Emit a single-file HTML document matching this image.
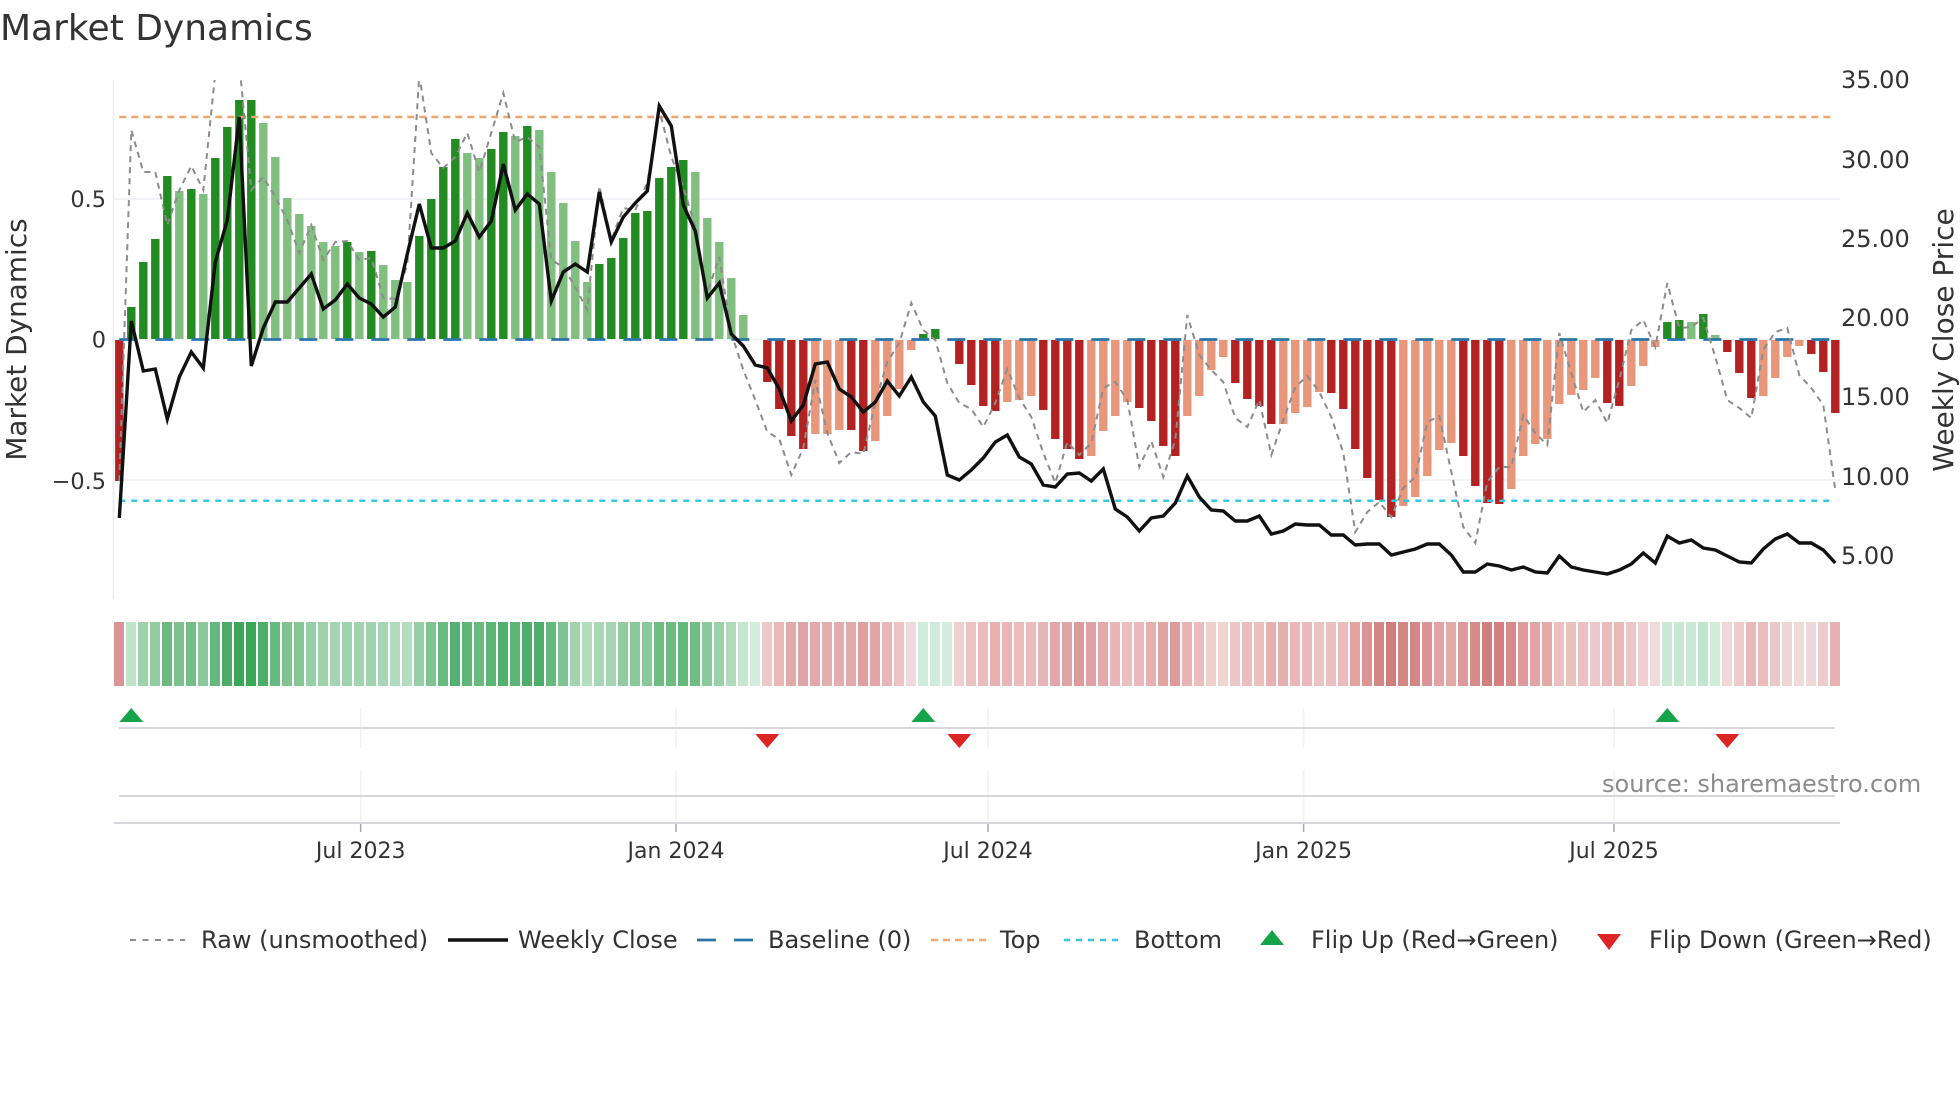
<!DOCTYPE html>
<html lang="en">
<head>
<meta charset="utf-8">
<title>Market Dynamics</title>
<style>
html,body{margin:0;padding:0;background:#fff;width:1960px;height:1102px;overflow:hidden}
svg{position:absolute;left:0;top:0}
text{font-family:"DejaVu Sans","Liberation Sans",sans-serif}
#strip{position:absolute;left:114.3px;top:622px;height:64px;display:flex;width:1730px}
#strip i{display:block;flex:none;width:10px;height:64px;margin-right:2px}
</style>
</head>
<body>
<div id="strip"><i style="background:#db9393"></i><i style="background:#bfe3c8"></i><i style="background:#9dd2ab"></i><i style="background:#92cda1"></i><i style="background:#6bbb80"></i><i style="background:#7dc28e"></i><i style="background:#72be86"></i><i style="background:#8ac99b"></i><i style="background:#65b97c"></i><i style="background:#4fab6b"></i><i style="background:#3aa858"></i><i style="background:#3aa858"></i><i style="background:#4cae69"></i><i style="background:#66ba7d"></i><i style="background:#7fc391"></i><i style="background:#85c696"></i><i style="background:#96cfa5"></i><i style="background:#9dd2ab"></i><i style="background:#a4d4b1"></i><i style="background:#9fd2ae"></i><i style="background:#a2d3af"></i><i style="background:#a0d3ae"></i><i style="background:#a8d6b5"></i><i style="background:#b2dbbd"></i><i style="background:#b4dcbf"></i><i style="background:#96cfa5"></i><i style="background:#7fc391"></i><i style="background:#68ba7f"></i><i style="background:#55b172"></i><i style="background:#60b678"></i><i style="background:#68ba7f"></i><i style="background:#5cb575"></i><i style="background:#52b06e"></i><i style="background:#5cb575"></i><i style="background:#4fad6b"></i><i style="background:#4fad6b"></i><i style="background:#66ba7d"></i><i style="background:#80c393"></i><i style="background:#a0d3ae"></i><i style="background:#b4dcbf"></i><i style="background:#a8d7b5"></i><i style="background:#a4d4b1"></i><i style="background:#90cca0"></i><i style="background:#88c89a"></i><i style="background:#88c89a"></i><i style="background:#70bd84"></i><i style="background:#6dbc82"></i><i style="background:#66b97d"></i><i style="background:#70bd84"></i><i style="background:#8ac99b"></i><i style="background:#9ad1a9"></i><i style="background:#b0dabb"></i><i style="background:#c5e6cf"></i><i style="background:#d3ecdf"></i><i style="background:#ecc8c8"></i><i style="background:#e9b8b9"></i><i style="background:#e2a9a9"></i><i style="background:#dea4a5"></i><i style="background:#e4a7aa"></i><i style="background:#e3aeae"></i><i style="background:#e4acae"></i><i style="background:#e3aaac"></i><i style="background:#df9f9f"></i><i style="background:#e3a6a8"></i><i style="background:#e9b5b7"></i><i style="background:#ecc4c4"></i><i style="background:#f0d8dc"></i><i style="background:#d0ebdb"></i><i style="background:#cfeadc"></i><i style="background:#d3ecdf"></i><i style="background:#efd0d2"></i><i style="background:#eac4c4"></i><i style="background:#ebbaba"></i><i style="background:#e9b0b2"></i><i style="background:#e9b5b6"></i><i style="background:#ecbcbc"></i><i style="background:#ecbcbc"></i><i style="background:#e6b5b5"></i><i style="background:#e4a6aa"></i><i style="background:#dfa4a6"></i><i style="background:#dc9b9c"></i><i style="background:#e0a0a4"></i><i style="background:#e5a9ac"></i><i style="background:#eab5b8"></i><i style="background:#ecbebe"></i><i style="background:#ecb8bc"></i><i style="background:#e6b0b0"></i><i style="background:#e0a59f"></i><i style="background:#e19a9c"></i><i style="background:#e9b2b4"></i><i style="background:#ecbcbe"></i><i style="background:#edd0cc"></i><i style="background:#efd5d2"></i><i style="background:#ecc5c6"></i><i style="background:#edbcbe"></i><i style="background:#edbfbf"></i><i style="background:#e9b0b2"></i><i style="background:#e6b0b0"></i><i style="background:#eab6b8"></i><i style="background:#ebb9bb"></i><i style="background:#ecc2c2"></i><i style="background:#ebc0c0"></i><i style="background:#ecbcbc"></i><i style="background:#e3a4a0"></i><i style="background:#dc9394"></i><i style="background:#d38885"></i><i style="background:#d07d7b"></i><i style="background:#d28783"></i><i style="background:#d38885"></i><i style="background:#dc9396"></i><i style="background:#e3a2a4"></i><i style="background:#e3a8a8"></i><i style="background:#de9a9a"></i><i style="background:#d58b88"></i><i style="background:#d07f7d"></i><i style="background:#d17f80"></i><i style="background:#d68a8a"></i><i style="background:#df9a9c"></i><i style="background:#e3a4a6"></i><i style="background:#e4a8a8"></i><i style="background:#ecc0c2"></i><i style="background:#e9c2bc"></i><i style="background:#ecc0c4"></i><i style="background:#ecc8ca"></i><i style="background:#ebbaba"></i><i style="background:#e9b9b6"></i><i style="background:#ecc6c6"></i><i style="background:#efcfd0"></i><i style="background:#f0dada"></i><i style="background:#c9e9d4"></i><i style="background:#c9e8d3"></i><i style="background:#cbe8d5"></i><i style="background:#c0e5cc"></i><i style="background:#d0ecd9"></i><i style="background:#f0d8d8"></i><i style="background:#eecbcd"></i><i style="background:#e9b8b8"></i><i style="background:#ecbcbc"></i><i style="background:#ebc8c8"></i><i style="background:#eed5d5"></i><i style="background:#f0dada"></i><i style="background:#f0d8da"></i><i style="background:#eeccce"></i><i style="background:#e8b0b2"></i></div>

<svg width="1960" height="1102" viewBox="0 0 1960 1102" xmlns="http://www.w3.org/2000/svg">
<defs><clipPath id="c"><rect x="113" y="80" width="1727" height="519"/></clipPath></defs>

<text x="0" y="40" font-size="36" fill="#333">Market Dynamics</text>

<!-- grid and axis -->
<path d="M113.5 80V599" stroke="#e8eaf1" stroke-width="1.5" fill="none"/>
<path d="M113.5 199H1840M113.5 339.5H1840M113.5 480H1840" stroke="#f1f2f6" stroke-width="2" fill="none"/>

<!-- bars -->
<path fill="#228b22" d="M127.1 307h8.4V339h-8.4zM139.1 262h8.4V339h-8.4zM151.1 239h8.4V339h-8.4zM163.1 176h8.4V339h-8.4zM187.1 189h8.4V339h-8.4zM211.1 158h8.4V339h-8.4zM223.1 127h8.4V339h-8.4zM235.1 100h8.4V339h-8.4zM247.1 100h8.4V339h-8.4zM343.1 242h8.4V339h-8.4zM367.1 251h8.4V339h-8.4zM415.1 236h8.4V339h-8.4zM427.1 199h8.4V339h-8.4zM439.1 167h8.4V339h-8.4zM451.1 139h8.4V339h-8.4zM487.1 149h8.4V339h-8.4zM499.1 132h8.4V339h-8.4zM523.1 126h8.4V339h-8.4zM595.1 264h8.4V339h-8.4zM607.1 258h8.4V339h-8.4zM619.1 238h8.4V339h-8.4zM631.1 213h8.4V339h-8.4zM643.1 211h8.4V339h-8.4zM655.1 178h8.4V339h-8.4zM667.1 167h8.4V339h-8.4zM679.1 160h8.4V339h-8.4zM919.1 334h8.4V339h-8.4zM931.1 329h8.4V339h-8.4zM1663.1 322h8.4V339h-8.4zM1675.1 320h8.4V339h-8.4zM1699.1 314h8.4V339h-8.4z"/>
<path fill="#80bf80" d="M175.1 191h8.4V339h-8.4zM199.1 194h8.4V339h-8.4zM259.1 123h8.4V339h-8.4zM271.1 157h8.4V339h-8.4zM283.1 198h8.4V339h-8.4zM295.1 214h8.4V339h-8.4zM307.1 226h8.4V339h-8.4zM319.1 242h8.4V339h-8.4zM331.1 246h8.4V339h-8.4zM355.1 252h8.4V339h-8.4zM379.1 265h8.4V339h-8.4zM391.1 280h8.4V339h-8.4zM403.1 282h8.4V339h-8.4zM463.1 153h8.4V339h-8.4zM475.1 158h8.4V339h-8.4zM511.1 136h8.4V339h-8.4zM535.1 130h8.4V339h-8.4zM547.1 172h8.4V339h-8.4zM559.1 203h8.4V339h-8.4zM571.1 241h8.4V339h-8.4zM583.1 282h8.4V339h-8.4zM691.1 172h8.4V339h-8.4zM703.1 218h8.4V339h-8.4zM715.1 242h8.4V339h-8.4zM727.1 278h8.4V339h-8.4zM739.1 315h8.4V339h-8.4zM1687.1 322h8.4V339h-8.4zM1711.1 335h8.4V339h-8.4z"/>
<path fill="#b22222" d="M115.1 340h8.4V481h-8.4zM763.1 340h8.4V382h-8.4zM775.1 340h8.4V409h-8.4zM787.1 340h8.4V436h-8.4zM799.1 340h8.4V449h-8.4zM847.1 340h8.4V430h-8.4zM859.1 340h8.4V451h-8.4zM955.1 340h8.4V364h-8.4zM967.1 340h8.4V385h-8.4zM979.1 340h8.4V406h-8.4zM991.1 340h8.4V411h-8.4zM1039.1 340h8.4V410h-8.4zM1051.1 340h8.4V439h-8.4zM1063.1 340h8.4V449h-8.4zM1075.1 340h8.4V459h-8.4zM1135.1 340h8.4V408h-8.4zM1147.1 340h8.4V421h-8.4zM1159.1 340h8.4V446h-8.4zM1171.1 340h8.4V456h-8.4zM1231.1 340h8.4V383h-8.4zM1243.1 340h8.4V399h-8.4zM1255.1 340h8.4V406h-8.4zM1267.1 340h8.4V424h-8.4zM1327.1 340h8.4V393h-8.4zM1339.1 340h8.4V409h-8.4zM1351.1 340h8.4V449h-8.4zM1363.1 340h8.4V478h-8.4zM1375.1 340h8.4V500h-8.4zM1387.1 340h8.4V517h-8.4zM1459.1 340h8.4V456h-8.4zM1471.1 340h8.4V486h-8.4zM1483.1 340h8.4V503h-8.4zM1495.1 340h8.4V504h-8.4zM1603.1 340h8.4V403h-8.4zM1615.1 340h8.4V406h-8.4zM1723.1 340h8.4V352h-8.4zM1735.1 340h8.4V373h-8.4zM1747.1 340h8.4V398h-8.4zM1807.1 340h8.4V354h-8.4zM1819.1 340h8.4V372h-8.4zM1831.1 340h8.4V413h-8.4z"/>
<path fill="#e9977a" d="M811.1 340h8.4V434h-8.4zM823.1 340h8.4V434h-8.4zM835.1 340h8.4V430h-8.4zM871.1 340h8.4V441h-8.4zM883.1 340h8.4V416h-8.4zM895.1 340h8.4V389h-8.4zM907.1 340h8.4V350h-8.4zM1003.1 340h8.4V402h-8.4zM1015.1 340h8.4V400h-8.4zM1027.1 340h8.4V396h-8.4zM1087.1 340h8.4V456h-8.4zM1099.1 340h8.4V431h-8.4zM1111.1 340h8.4V416h-8.4zM1123.1 340h8.4V402h-8.4zM1183.1 340h8.4V416h-8.4zM1195.1 340h8.4V396h-8.4zM1207.1 340h8.4V370h-8.4zM1219.1 340h8.4V357h-8.4zM1279.1 340h8.4V424h-8.4zM1291.1 340h8.4V413h-8.4zM1303.1 340h8.4V407h-8.4zM1315.1 340h8.4V392h-8.4zM1399.1 340h8.4V506h-8.4zM1411.1 340h8.4V497h-8.4zM1423.1 340h8.4V476h-8.4zM1435.1 340h8.4V450h-8.4zM1447.1 340h8.4V443h-8.4zM1507.1 340h8.4V489h-8.4zM1519.1 340h8.4V456h-8.4zM1531.1 340h8.4V444h-8.4zM1543.1 340h8.4V439h-8.4zM1555.1 340h8.4V404h-8.4zM1567.1 340h8.4V395h-8.4zM1579.1 340h8.4V390h-8.4zM1591.1 340h8.4V378h-8.4zM1627.1 340h8.4V386h-8.4zM1639.1 340h8.4V366h-8.4zM1651.1 340h8.4V347h-8.4zM1759.1 340h8.4V396h-8.4zM1771.1 340h8.4V378h-8.4zM1783.1 340h8.4V357h-8.4zM1795.1 340h8.4V346h-8.4z"/>

<!-- reference lines -->
<path d="M119.3 339.5H1835" stroke="#2a76a8" stroke-width="2.8" stroke-dasharray="18 18" fill="none"/>
<path d="M119.3 117H1835" stroke="#f0a76c" stroke-width="2.5" stroke-dasharray="7 5" fill="none"/>
<path d="M119.3 500.7H1835" stroke="#36c6dd" stroke-width="2.5" stroke-dasharray="6 6" fill="none"/>

<!-- raw line -->
<path clip-path="url(#c)" fill="none" stroke="#8c8c8c" stroke-width="2" stroke-dasharray="6 5" d="M119.3 481 131.3 130 143.3 172 155.3 172 167.3 225 179.3 190 191.3 166 203.3 190 215.3 73 227.3 40 239.3 63 251.3 190 263.3 177 275.3 197 287.3 220 299.3 253 311.3 225 323.3 260 335.3 242 347.3 241 359.3 260 371.3 258 383.3 298 395.3 299 407.3 265 419.3 75 431.3 153 443.3 168 455.3 157 467.3 133 479.3 172 491.3 133 503.3 93 515.3 142 527.3 137 539.3 147 551.3 260 563.3 267 575.3 287 587.3 310 599.3 186 611.3 240 623.3 208 635.3 210 647.3 183 659.3 110 671.3 157 683.3 187 695.3 227 707.3 293 719.3 257 731.3 333 743.3 370 755.3 400 767.3 432 779.3 439 791.3 475 803.3 448 815.3 380 827.3 433 839.3 463 851.3 452 863.3 454 875.3 403 887.3 362 899.3 343 911.3 303 923.3 330 935.3 340 947.3 383 959.3 403 971.3 409 983.3 427 995.3 403 1007.3 369 1019.3 398 1031.3 417 1043.3 453 1055.3 483 1067.3 442 1079.3 455 1091.3 443 1103.3 388 1115.3 382 1127.3 400 1139.3 467 1151.3 441 1163.3 477 1175.3 440 1187.3 315 1199.3 355 1211.3 370 1223.3 382 1235.3 418 1247.3 427 1259.3 400 1271.3 455 1283.3 420 1295.3 387 1307.3 376 1319.3 392 1331.3 417 1343.3 453 1355.3 532 1367.3 512 1379.3 502 1391.3 517 1403.3 488 1415.3 477 1427.3 422 1439.3 416 1451.3 472 1463.3 527 1475.3 543 1487.3 482 1499.3 467 1511.3 467 1523.3 415 1535.3 433 1547.3 445 1559.3 333 1571.3 373 1583.3 412 1595.3 400 1607.3 423 1619.3 380 1631.3 330 1643.3 320 1655.3 347 1667.3 283 1679.3 328 1691.3 327 1703.3 318 1715.3 357 1727.3 400 1739.3 408 1751.3 418 1763.3 350 1775.3 332 1787.3 328 1799.3 375 1811.3 388 1823.3 405 1835.3 490"/>

<!-- weekly close -->
<path fill="none" stroke="#111" stroke-width="3.4" d="M119.3 518 131.3 321 143.3 371 155.3 369 167.3 419 179.3 377 191.3 352 203.3 368 215.3 262 227.3 220 239.3 117 251.3 366 263.3 328 275.3 302 287.3 302 299.3 288 311.3 274 323.3 309 335.3 300 347.3 284 359.3 298 371.3 304 383.3 317 395.3 307 407.3 254 419.3 204 431.3 248 443.3 248 455.3 241 467.3 213 479.3 237 491.3 221 503.3 164 515.3 210 527.3 194 539.3 204 551.3 301 563.3 272 575.3 264 587.3 272 599.3 192 611.3 242 623.3 217 635.3 203 647.3 191 659.3 106 671.3 126 683.3 205 695.3 231 707.3 298 719.3 283 731.3 334 743.3 346 755.3 365 767.3 368 779.3 389 791.3 421 803.3 405 815.3 364 827.3 362 839.3 389 851.3 397 863.3 412 875.3 402 887.3 381 899.3 396 911.3 377 923.3 402 935.3 416 947.3 475 959.3 480 971.3 470 983.3 458 995.3 442 1007.3 435 1019.3 457 1031.3 464 1043.3 485 1055.3 487 1067.3 474 1079.3 473 1091.3 481 1103.3 469 1115.3 509 1127.3 517 1139.3 531 1151.3 518 1163.3 516 1175.3 503 1187.3 476 1199.3 497 1211.3 510 1223.3 511 1235.3 521 1247.3 521 1259.3 516 1271.3 534 1283.3 531 1295.3 524 1307.3 525 1319.3 525 1331.3 535 1343.3 535 1355.3 545 1367.3 544 1379.3 544 1391.3 555 1403.3 552 1415.3 549 1427.3 544 1439.3 544 1451.3 555 1463.3 572 1475.3 572 1487.3 564 1499.3 566 1511.3 570 1523.3 567 1535.3 572 1547.3 573 1559.3 556 1571.3 567 1583.3 570 1595.3 572 1607.3 574 1619.3 570 1631.3 564 1643.3 553 1655.3 563 1667.3 536 1679.3 543 1691.3 540 1703.3 548 1715.3 550 1727.3 556 1739.3 562 1751.3 563 1763.3 549 1775.3 539 1787.3 534 1799.3 543 1811.3 543 1823.3 550 1835.3 563"/>

<!-- axis labels -->
<g font-size="22.4" fill="#333" text-anchor="end">
<text x="106" y="207">0.5</text>
<text x="106" y="347.5">0</text>
<text x="106" y="489">−0.5</text>
</g>
<g font-size="24" fill="#333">
<text x="1841" y="88">35.00</text>
<text x="1841" y="168">30.00</text>
<text x="1841" y="247">25.00</text>
<text x="1841" y="326">20.00</text>
<text x="1841" y="405">15.00</text>
<text x="1841" y="485">10.00</text>
<text x="1841" y="564">5.00</text>
</g>
<text transform="translate(26 339.5) rotate(-90)" font-size="27.9" fill="#333" text-anchor="middle">Market Dynamics</text>
<text transform="translate(1953 340) rotate(-90)" font-size="28" fill="#333" text-anchor="middle">Weekly Close Price</text>

<!-- flip panels -->
<path d="M360.7 708V748M676 708V748M988 708V748M1303.6 708V748M1614 708V748M360.7 770V823M676 770V823M988 770V823M1303.6 770V823M1614 770V823" stroke="#eff1f5" stroke-width="1.5" fill="none"/>
<path d="M119 728H1835M119 796H1835M114 823H1840" stroke="#d6d8dc" stroke-width="2" fill="none"/>
<path d="M360.7 824V832M676 824V832M988 824V832M1303.6 824V832M1614 824V832" stroke="#a5a8ac" stroke-width="1.5" fill="none"/>
<path fill="#16a34a" d="M119.3 722 131.3 708 143.3 722zM911.3 722 923.3 708 935.3 722zM1655.3 722 1667.3 708 1679.3 722z"/>
<path fill="#dc2626" d="M755.3 734h24L767.3 748zM947.3 734h24L959.3 748zM1715.3 734h24L1727.3 748z"/>

<g font-size="22" fill="#333" text-anchor="middle">
<text x="360.7" y="858">Jul 2023</text>
<text x="676" y="858">Jan 2024</text>
<text x="988" y="858">Jul 2024</text>
<text x="1303.6" y="858">Jan 2025</text>
<text x="1614" y="858">Jul 2025</text>
</g>

<text x="1602" y="792" font-size="24" fill="#8c8c8c">source: sharemaestro.com</text>

<!-- legend -->
<path d="M130 940H185" stroke="#8c8c8c" stroke-width="2" stroke-dasharray="6 6.5" fill="none"/>
<path d="M448 940H508" stroke="#111" stroke-width="3.4" fill="none"/>
<path d="M697 940H754" stroke="#2a76a8" stroke-width="2.8" stroke-dasharray="19 18" fill="none"/>
<path d="M931 940H986" stroke="#f0a76c" stroke-width="2.5" stroke-dasharray="7 5" fill="none"/>
<path d="M1064 940H1119" stroke="#36c6dd" stroke-width="2.5" stroke-dasharray="6 6" fill="none"/>
<path fill="#16a34a" d="M1260 945 1272 930 1284 945z"/>
<path fill="#dc2626" d="M1597 934h24L1609 950z"/>
<g font-size="24" fill="#333">
<text x="201" y="948">Raw (unsmoothed)</text>
<text x="518" y="948">Weekly Close</text>
<text x="768" y="948">Baseline (0)</text>
<text x="1000" y="948">Top</text>
<text x="1134" y="948">Bottom</text>
<text x="1311" y="948">Flip Up (Red→Green)</text>
<text x="1649" y="948">Flip Down (Green→Red)</text>
</g>
</svg>
</body>
</html>
